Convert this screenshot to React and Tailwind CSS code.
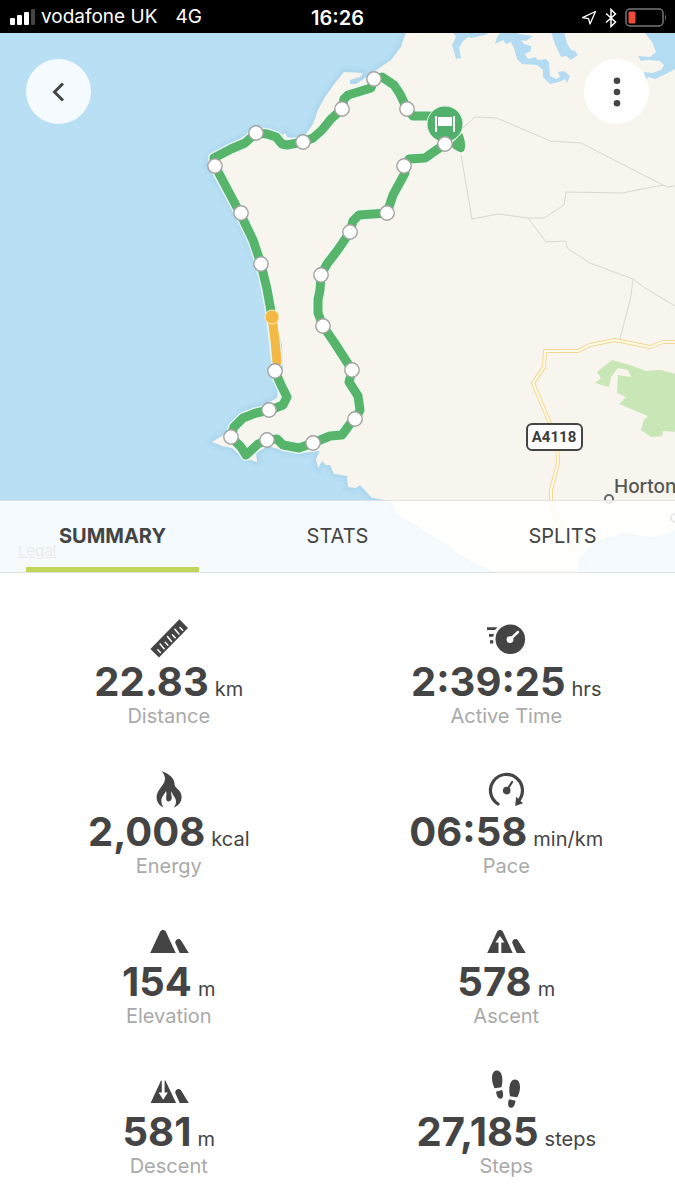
import { useState } from "react"

const ROUTE_NORTH =
  "M445 119 L437 117 L428 116 L413 116 L407 109 L400 94 L394 85 L382 77 L374 79 L371 88 L358 92 L348 95 L344 99 L342 109 L331 119 L322 130 L313 138 L303 142 L287 145 L282 144 L276 137 L267 134 L256 133 L245 143 L231 149 L214 158 L215 166 L240 213 L253 240 L261 264 L267 289 L272 317"

const ROUTE_SLOW = "M272 317 L275 340 L277 362"

const ROUTE_SOUTH =
  "M275 371 L281 385 L287 397 L283 405 L270 410 L256 413 L243 418 L234 427 L231 437 L241 447 L246 455 L258 444 L267 440 L277 439 L283 445 L299 448 L313 443 L330 436 L342 435 L350 424 L355 420 L360 410 L358 396 L349 382 L352 370 L334 342 L323 326 L318 313 L318 300 L320 290 L321 275 L327 264 L337 251 L350 232 L353 221 L359 215 L387 213 L393 195 L405 173 L404 166 L409 159 L425 158 L435 151 L445 144"

const COAST =
  "M406 32 L401 47 L391 60 L378 69 L370 75 L356 84 L350 84 L350 80 L360 77 L363 73 L344 72 L335 83 L325 97 L318 110 L313 124 L306 134 L296 139 L287 137 L285 133 L281 136 L270 131 L256 130 L244 137 L225 147 L212 156 L208 166 L221 187 L237 215 L249 240 L258 265 L266 285 L275 315 L282 345 L283 370 L279 383 L277 398 L262 406 L245 411 L235 420 L227 433 L212 442 L222 446 L232 448 L240 455 L248 459 L257 462 L256 453 L268 446 L285 451 L300 453 L320 451 L316 459 L318 468 L322 461 L326 465 L330 465 L334 474 L342 475 L347 476 L348 487 L356 488 L360 485 L372 498 L385 500 L393 505 L396 514 L410 522 L430 535 L445 543 L458 554 L480 566 L502 575 L577 575 L579 560 L588 548 L602 539 L625 533 L650 537 L660 536 L680 528 L680 32 Z"

// One marker per kilometre, in map coordinates
const KM_MARKERS = [
  [374, 79],
  [342, 109],
  [407, 109],
  [256, 133],
  [303, 142],
  [215, 166],
  [241, 213],
  [261, 264],
  [404, 166],
  [387, 213],
  [350, 232],
  [321, 275],
  [323, 326],
  [352, 370],
  [355, 419],
  [313, 443],
  [267, 440],
  [231, 437],
  [269, 410],
  [275, 371],
  [445, 144],
]

const RouteMap = () => (
  <svg viewBox="0 33 675 540" className="block w-full h-auto bg-[#b8dff4]" role="img" aria-label="Route map">
    {/* Land */}
    <path d={COAST} fill="none" stroke="#a8d3ec" strokeWidth="12" strokeLinejoin="round" opacity="0.25" />
    <path d={COAST} fill="none" stroke="#a8d3ec" strokeWidth="6" strokeLinejoin="round" opacity="0.4" />
    <path d={COAST} fill="#f8f5ee" />

    {/* Creeks and estuary */}
    <g fill="#b3dcf3">
      <path d="M453 32 L456 37 L452 45 L456 59 L461 58 L459 48 L463 41 L468 37 L471 38 L485 35 L490 32 Z" />
      <path d="M501 32 L497 37 L495 44 L503 40 L506 44 L511 42 L514 48 L517 59 L522 64 L537 65 L543 70 L543 77 L550 84 L559 82 L565 79 L567 83 L570 76 L564 71 L558 72 L560 77 L556 79 L550 76 L549 62 L546 59 L538 60 L535 57 L528 59 L525 54 L531 51 L531 46 L524 44 L521 40 L526 41 L533 36 L519 34 L517 32 Z" />
      <path d="M551 32 L555 44 L561 57 L566 56 L571 60 L578 55 L575 51 L571 50 L567 43 L564 32 Z" />
      <path d="M644 32 L652 42 L656 52 L650 57 L638 56 L641 61 L648 60 L660 61 L664 65 L661 70 L652 73 L644 72 L646 81 L648 77 L655 79 L668 73 L680 66 L680 32 Z" />
    </g>

    {/* Woodland */}
    <path
      d="M612 360 L597 372 L601 378 L595 383 L609 387 L611 377 L618 368 L628 370 L631 377 L618 375 L617 393 L626 397 L619 404 L648 416 L644 420 L641 430 L651 437 L662 436 L663 431 L680 432 L680 375 L660 370 L646 371 L630 365 Z"
      fill="#c9e6b6"
    />

    {/* Minor roads */}
    <g fill="none" stroke="#dad7d0" strokeWidth="1">
      <path d="M462 129 L475 117 L497 118 L550 141 L581 143 L663 185 L668 187 L680 185" />
      <path d="M461 155 L472 219 L498 214 L528 218 L544 218 L564 205 L566 192 L622 193 L663 185" />
      <path d="M528 218 L546 242 L566 241 L567 248 L590 263 L633 279 L645 288 L665 300 L680 309" />
      <path d="M620 339 L631 296 L633 279" />
    </g>

    {/* A4118 */}
    <g fill="none" strokeLinejoin="round">
      <path d="M680 342 L663 342 L650 347 L615 340 L590 345 L578 351 L545 351 L544 367 L533 383 L557 440 L558 463 L551 490 L551 503 L557 520 L575 552" stroke="#f2d795" strokeWidth="4" />
      <path d="M680 342 L663 342 L650 347 L615 340 L590 345 L578 351 L545 351 L544 367 L533 383 L557 440 L558 463 L551 490 L551 503 L557 520 L575 552" stroke="#fffbe6" strokeWidth="2" />
    </g>
    <rect x="527" y="424" width="55" height="26" rx="5" fill="#fff" stroke="#444" strokeWidth="2" />
    <text x="554" y="442" textAnchor="middle" fontSize="15" className="font-['Roboto',sans-serif] font-bold" fill="#3c3c3c">
      A4118
    </text>

    <circle cx="609" cy="499" r="4" fill="#fff" stroke="#666" strokeWidth="2" />
    <circle cx="675" cy="518" r="4" fill="#fff" stroke="#666" strokeWidth="2" />
    <text x="614" y="493" fontSize="19" className="font-['Inter',sans-serif] font-medium" fill="#555">
      Horton
    </text>

    {/* Route */}
    <g fill="none" strokeLinecap="round" strokeLinejoin="round">
      <path d={`${ROUTE_NORTH} L277 362 ${ROUTE_SOUTH}`} stroke="#eefaf4" strokeWidth="12" opacity="0.8" />
      <path d={ROUTE_NORTH} stroke="#56b56a" strokeWidth="9" />
      <path d={ROUTE_SOUTH} stroke="#56b56a" strokeWidth="9" />
      <path d={ROUTE_SLOW} stroke="#f4b942" strokeWidth="9" />
    </g>
    <path d="M450 145 L462 133 C465 139 466 146 464 151 Q461 154 454 149 Z" fill="#56b56a" />
    <circle cx="445" cy="124" r="18" fill="#51b16c" stroke="#dff2e4" strokeWidth="1" />
    <g fill="#fff">
      <rect x="435" y="116" width="2" height="16" />
      <rect x="453" y="116" width="2" height="16" />
      <rect x="438" y="117" width="14" height="9" />
    </g>
    {KM_MARKERS.map(([x, y]) => (
      <circle key={`${x}-${y}`} cx={x} cy={y} r="7.2" fill="#fff" stroke="#a3a3a3" strokeWidth="1.4" />
    ))}
    <circle cx="272" cy="317" r="7" fill="#f4b942" stroke="#fbe9c0" strokeWidth="1" />
  </svg>
)

const Hill = () => <path d="M26.2 24.8 C26.2 21 30.5 19.6 32.4 23 L39.8 35 H30.7 Z" />

const icons = {
  ruler: (
    <>
      <path d="M1.4 31 L30.4 1.2 L39 10 L10 39.4 Z" />
      <path
        d="M11.4 34.5 l-2.6 -2.8 M15.1 30.8 l-4 -4.8 M18.8 27.1 l-2.6 -2.8 M22.5 23.4 l-4 -4.8 M26.2 19.7 l-2.6 -2.8 M29.9 16 l-4 -4.8 M33.6 12.3 l-2.6 -2.8"
        stroke="#fff"
        strokeWidth="1.5"
        strokeLinecap="round"
      />
    </>
  ),
  stopwatch: (
    <>
      <circle cx="24.3" cy="21.3" r="14.8" />
      <path d="M1 9.2 H11.4 L9 12 H1 Z M3 16 H8 L7.2 18.8 H3 Z M4 22.2 H7.3 V25.4 H4 Z" />
      <circle cx="24" cy="21.6" r="3.4" fill="#fff" />
      <path d="M24 21.5 L32 14" stroke="#fff" strokeWidth="2.4" strokeLinecap="round" />
    </>
  ),
  flame: (
    <path d="M12.6 3.2 C20.5 5.6 25.6 10.5 25.6 16.5 C25.6 20.5 32.6 21.5 32.6 29 C32.6 34 29.6 37.8 24.8 39.4 C26.8 36.8 27.6 34 26.6 31.2 C25.6 28.4 23.2 27 22.6 23 C21.6 25.5 22.8 27.4 22.8 29.6 C22.8 32 21.6 33.4 19.8 33.4 C17.8 33.4 16.8 31.8 17.2 29.4 C17.4 27.4 17.8 25.6 17 23 C15.6 26.6 13 28 12.4 31.4 C12 34.4 13 37 14.6 39.4 C10.4 37.6 7.6 34 7.6 29 C7.6 21.6 16 17 16 10.4 C16 7.8 14.4 5.2 12.6 3.2 Z" />
  ),
  pace: (
    <>
      <path d="M12 36 A16 16 0 1 1 31.5 34" fill="none" stroke="#444" strokeWidth="3.2" strokeLinecap="round" />
      <path d="M30.2 28.8 L37 35.2 L29.2 38 Z" />
      <circle cx="20.7" cy="22.6" r="3.8" />
      <path d="M20.7 22.4 L26.1 14" stroke="#444" strokeWidth="2.2" strokeLinecap="round" />
    </>
  ),
  elevation: (
    <>
      <path d="M1.2 35 L11.2 13.4 Q14 10 16.8 13.4 L26.7 35 Z" />
      <Hill />
    </>
  ),
  ascent: (
    <>
      <path d="M1.2 35 L11.2 13.4 Q14 10 16.8 13.4 L26.7 35 Z" />
      <Hill />
      <path d="M13.9 18 L18.4 24.6 H15.3 V35 H12.5 V24.6 H9.4 Z" fill="#fff" />
    </>
  ),
  descent: (
    <>
      <path d="M1.6 35 L12 12.4 H16.4 L27.1 35 Z" />
      <Hill />
      <path d="M12.8 12 H15.6 V24.6 H18.8 L14.2 31.8 L9.6 24.6 H12.8 Z" fill="#fff" />
    </>
  ),
  steps: (
    <>
      <path d="M6 10.5 C6 5 8 2.6 11 2.6 C15 2.6 16.6 8 16.4 13 C16.3 16 15.6 18 15.4 19.3 L8.4 20.3 C7.2 17 6 14 6 10.5 Z" />
      <path d="M10 23.8 L16 22 C17.6 25 17.8 30.5 14.5 30.7 C11.5 30.8 10.6 27.5 10 23.8 Z" />
      <path d="M34 20 C34.2 14.4 32 11.6 29 11.6 C25 11.6 23.5 16.5 23.3 21.5 C23.2 24.5 23.8 26.5 24 28.3 L31.2 29.3 C32.8 26.5 33.8 23.5 34 20 Z" />
      <path d="M29.5 32.7 L23.3 31.2 C21.6 34 21.4 39.5 24.8 39.8 C27.8 40 29 36.5 29.5 32.7 Z" />
    </>
  ),
}

const stats = [
  { icon: "ruler", value: "22.83", unit: "km", label: "Distance" },
  { icon: "stopwatch", value: "2:39:25", unit: "hrs", label: "Active Time" },
  { icon: "flame", value: "2,008", unit: "kcal", label: "Energy" },
  { icon: "pace", value: "06:58", unit: "min/km", label: "Pace" },
  { icon: "elevation", value: "154", unit: "m", label: "Elevation" },
  { icon: "ascent", value: "578", unit: "m", label: "Ascent" },
  { icon: "descent", value: "581", unit: "m", label: "Descent" },
  { icon: "steps", value: "27,185", unit: "steps", label: "Steps" },
]

const Stat = ({ icon, value, unit, label }) => (
  <div className="flex flex-col items-center">
    <svg viewBox="0 0 40 40" className="w-10 h-10 mb-1" fill="#444" aria-hidden="true">
      {icons[icon]}
    </svg>
    <p className="flex items-baseline gap-1.5 text-[#444]">
      <span className="text-[40px] leading-10 font-bold">{value}</span>
      <span className="text-[20px] leading-6">{unit}</span>
    </p>
    <p className="text-[20px] leading-7 text-[#a9a9a9]">{label}</p>
  </div>
)

const StatusBar = () => (
  <header className="grid grid-cols-3 items-center h-[33px] px-2 pt-0.5 bg-black text-white text-[19px]">
    <div className="flex items-center gap-1.5 whitespace-nowrap">
      <svg viewBox="0 0 27 18" className="w-[27px] h-[18px] shrink-0" fill="#fff" aria-hidden="true">
        <rect x="2" y="9" width="5" height="7" rx="1" />
        <rect x="9" y="6" width="5" height="10" rx="1" />
        <rect x="16" y="3" width="5" height="13" rx="1" />
        <rect x="23" y="0" width="4" height="16" rx="1" fill="#444" />
      </svg>
      <span>vodafone UK</span>
      <span className="ml-3">4G</span>
    </div>
    <span className="text-center text-[20px] font-semibold">16:26</span>
    <div className="flex items-center justify-end gap-2">
      <svg viewBox="0 0 16 16" className="w-4 h-4" fill="none" stroke="#fff" strokeWidth="1.3" strokeLinejoin="round" aria-hidden="true">
        <path d="M14.5 1.5 L9 14 L7.6 8.6 L1.5 7.6 Z" />
      </svg>
      <svg viewBox="0 0 12 20" className="w-3 h-5" fill="none" stroke="#fff" strokeWidth="1.5" aria-hidden="true">
        <path d="M1 5.5 L10.5 14 L6 18.5 V1.5 L10.5 6 L1 14.5" />
      </svg>
      <svg viewBox="0 0 42 19" className="w-[42px] h-[19px]" aria-hidden="true">
        <rect x="1" y="1" width="37" height="17" rx="4" fill="none" stroke="#777" strokeWidth="1.5" />
        <rect x="3.5" y="3.5" width="7" height="12" rx="1.5" fill="#f04a3a" />
        <path d="M40 6.5 Q42 9.5 40 12.5 Z" fill="#777" />
      </svg>
    </div>
  </header>
)

const tabs = ["SUMMARY", "STATS", "SPLITS"]

const App = () => {
  const [activeTab, setActiveTab] = useState("SUMMARY")

  return (
    <div className="min-h-screen bg-white overflow-hidden font-['Inter',sans-serif]">
      <StatusBar />

      <section className="relative overflow-hidden">
        <RouteMap />
        <a href="#legal" className="absolute left-[18px] bottom-3 text-[15px] leading-5 text-[#777] underline">
          Legal
        </a>

        <div className="absolute inset-x-0 top-0 flex justify-between p-[26px]">
          <button type="button" aria-label="Back" className="flex items-center justify-center size-[65px] rounded-full bg-white/85">
            <svg viewBox="0 0 20 20" className="size-5" fill="none" stroke="#444" strokeWidth="3" aria-hidden="true">
              <path d="M14 1.5 L5.5 10 L14 18.5" />
            </svg>
          </button>
          <button type="button" aria-label="More options" className="flex items-center justify-center size-[65px] rounded-full bg-white/95">
            <svg viewBox="0 0 8 30" className="w-2 h-[30px]" fill="#444" aria-hidden="true">
              <circle cx="4" cy="3.8" r="3.3" />
              <circle cx="4" cy="15" r="3.3" />
              <circle cx="4" cy="26.2" r="3.3" />
            </svg>
          </button>
        </div>

        {/* Tabs over the bottom of the map */}
        <nav className="absolute inset-x-0 bottom-0 grid grid-cols-3 h-[73px] border-y border-black/10 bg-white/85">
          {tabs.map((tab) => (
            <button
              key={tab}
              type="button"
              onClick={() => setActiveTab(tab)}
              className={`relative pb-0.5 text-xl text-[#444] ${activeTab === tab ? "font-bold" : ""}`}
            >
              {tab}
              {activeTab === tab && <span className="absolute inset-x-[26px] bottom-0 h-[5px] bg-[#c1d657]"></span>}
            </button>
          ))}
        </nav>
      </section>

      <main className="grid grid-cols-2 gap-y-[38px] pt-[45px] pb-2">
        {stats.map((stat) => (
          <Stat key={stat.label} {...stat} />
        ))}
      </main>
    </div>
  )
}

export default App
